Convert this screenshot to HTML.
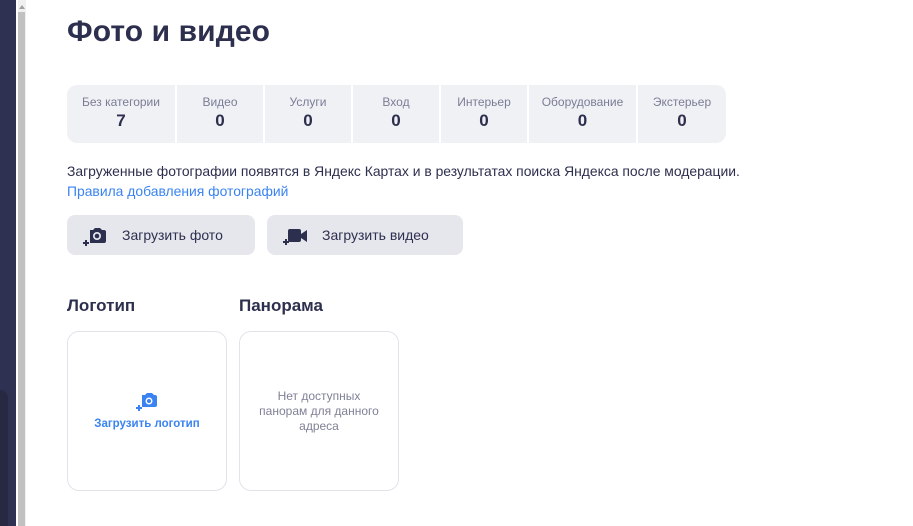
<!DOCTYPE html>
<html><head><meta charset="utf-8"><style>
*{margin:0;padding:0;box-sizing:border-box}
body{width:913px;height:526px;overflow:hidden;background:#fff;font-family:"Liberation Sans",sans-serif;color:#2d2f4e;position:relative}
.nav{position:absolute;left:0;top:0;width:16px;height:526px;background:#2f3152}
.nav2{position:absolute;left:0;top:390px;width:8px;height:136px;background:#272943;border-top-right-radius:8px}
.sb{position:absolute;left:18px;top:0;width:8px;height:526px;background:#f0f0f0}
.thumb{position:absolute;left:18px;top:12px;width:7px;height:514px;background:#c1c1c1}
.arr{position:absolute;left:19px;top:5px;width:0;height:0;border-left:3px solid transparent;border-right:3px solid transparent;border-bottom:4px solid #a0a0a0}
h1{position:absolute;left:67px;top:15px;font-size:30px;font-weight:bold;letter-spacing:0.1px}
.stats{position:absolute;left:67px;top:85px;display:flex;gap:2px}
.st{height:58px;background:#f0f1f5;text-align:center;padding-top:10px}
.st .l{font-size:12px;color:#7a7d96}
.st .v{font-size:17px;font-weight:bold;margin-top:2px}
.st:first-child{border-radius:10px 0 0 10px}.st:last-child{border-radius:0 10px 10px 0}
.info{position:absolute;left:67px;top:161px;font-size:13.9px;line-height:20px}
.info a{color:#3a83f1;text-decoration:none;display:block}
.btn{position:absolute;top:215px;height:40px;background:#e6e7ed;border-radius:8px;font-size:14px;display:flex;align-items:center}
.btn svg{position:absolute;left:16px;top:10px}
h2{position:absolute;top:296px;font-size:17px;font-weight:bold}
.card{position:absolute;top:331px;width:160px;height:160px;border:1px solid #e2e3ea;border-radius:12px;text-align:center}
</style></head><body>
<div class="nav"></div><div class="nav2"></div><div class="sb"></div><div class="thumb"></div><div class="arr"></div>
<h1>Фото и видео</h1>
<div class="stats">
<div class="st" style="width:108px"><div class="l">Без категории</div><div class="v">7</div></div>
<div class="st" style="width:86px"><div class="l">Видео</div><div class="v">0</div></div>
<div class="st" style="width:86px"><div class="l">Услуги</div><div class="v">0</div></div>
<div class="st" style="width:86px"><div class="l">Вход</div><div class="v">0</div></div>
<div class="st" style="width:86px"><div class="l">Интерьер</div><div class="v">0</div></div>
<div class="st" style="width:107px"><div class="l">Оборудование</div><div class="v">0</div></div>
<div class="st" style="width:88px"><div class="l">Экстерьер</div><div class="v">0</div></div>
</div>
<div class="info">Загруженные фотографии появятся в Яндекс Картах и в результатах поиска Яндекса после модерации.<a>Правила добавления фотографий</a></div>
<div class="btn" style="left:67px;width:188px"><svg width="24" height="22" viewBox="0 0 24 22"><path d="M7 5h3l2-2h5l2 2h2a2 2 0 0 1 2 2v9a2 2 0 0 1-2 2H7z" fill="#2d2f4e"/><circle cx="14" cy="11" r="4" fill="#e6e7ed"/><circle cx="14" cy="11" r="2.3" fill="#2d2f4e"/><path d="M3 15v6M0 18h6" stroke="#2d2f4e" stroke-width="2"/></svg><span style="margin-left:55px">Загрузить фото</span></div>
<div class="btn" style="left:267px;width:196px"><svg width="26" height="22" viewBox="0 0 26 22"><rect x="5" y="4" width="13" height="13" rx="2" fill="#2d2f4e"/><path d="M18 9l6-4v12l-6-4z" fill="#2d2f4e"/><path d="M3 14v6M0 17h6" stroke="#2d2f4e" stroke-width="2"/></svg><span style="margin-left:55px">Загрузить видео</span></div>
<h2 style="left:67px">Логотип</h2>
<h2 style="left:239px">Панорама</h2>
<div class="card" style="left:67px"><svg style="position:absolute;left:68px;top:60px" width="22" height="20" viewBox="0 0 22 20"><path d="M6 3h3l2-2h5l2 2h1a2 2 0 0 1 2 2v8a2 2 0 0 1-2 2H6z" fill="#3a83f1"/><circle cx="13" cy="9" r="3.5" fill="#fff"/><circle cx="13" cy="9" r="2" fill="#3a83f1"/><path d="M3 13v6M0 16h6" stroke="#3a83f1" stroke-width="2"/></svg><div style="position:absolute;top:86px;width:100%;font-size:11.5px;font-weight:bold;color:#3a83f1">Загрузить логотип</div></div>
<div class="card" style="left:239px"><div style="position:absolute;top:57px;width:100%;font-size:12px;line-height:15px;color:#7f8196">Нет доступных<br>панорам для данного<br>адреса</div></div>
</body></html>
